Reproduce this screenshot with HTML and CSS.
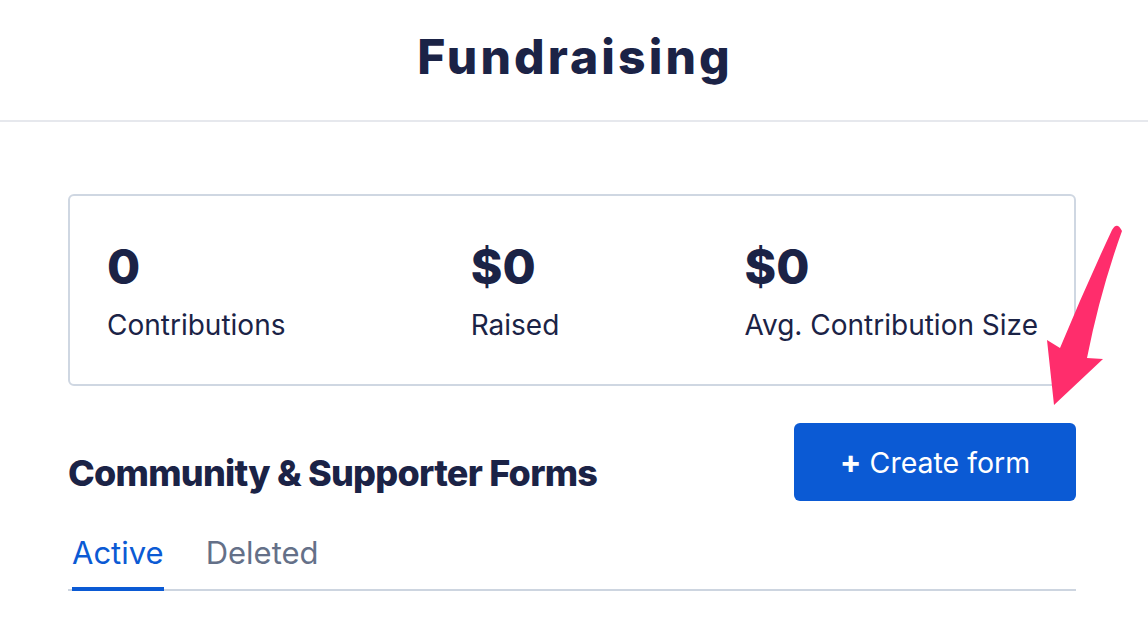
FILE: index.html
```html
<!DOCTYPE html>
<html lang="en">
  <head>
    <meta charset="UTF-8" />
    <meta name="viewport" content="width=device-width, initial-scale=1.0" />
    <title>Fundraising</title>
    <link rel="stylesheet" href="styles.css">
  </head>
  <body>
    <header class="page-header">
      <h1>Fundraising</h1>
    </header>

    <main class="container">
      <section class="stats-card">
        <div class="stat">
          <div class="stat-value">0</div>
          <div class="stat-label">Contributions</div>
        </div>
        <div class="stat">
          <div class="stat-value">$0</div>
          <div class="stat-label">Raised</div>
        </div>
        <div class="stat">
          <div class="stat-value">$0</div>
          <div class="stat-label">Avg. Contribution Size</div>
        </div>
      </section>

      <div class="section-head">
        <h2>Community &amp; Supporter Forms</h2>
        <button class="btn"><span class="btn-plus">+</span> Create form</button>
      </div>

      <nav class="tabs">
        <a class="tab active" href="#">Active</a>
        <a class="tab" href="#">Deleted</a>
      </nav>
    </main>

    <!-- annotation arrow drawn over the page -->
    <svg class="pointer-arrow" width="1148" height="634" viewBox="0 0 1148 634">
      <path d="M1112 230 Q1117 221 1122 231 Q1100 292 1087 358 L1103 359 L1054 405 L1047 340 L1060 348 Q1084 290 1112 230 Z" fill="#ff2d6c" />
    </svg>
  </body>
</html>
```

FILE: styles.css
```css
body {
  font-family: Inter, "Noto Sans", sans-serif;
  color: #1b2346;
  margin: 0;
  padding: 0;
  background: #fff;
}

.page-header {
  padding: 33px 0 39px;
  border-bottom: 2px solid #e6e8ed;
  text-align: center;
}

.page-header h1 {
  margin: 0;
  padding-left: 2px;
  font-size: 48px;
  line-height: 1;
  font-weight: 800;
  letter-spacing: 3.1px;
}

.container {
  margin: 72px 72px 0 68px;
}

.stats-card {
  display: flex;
  justify-content: space-between;
  border: 2px solid #cfd7e2;
  border-radius: 6px;
  padding: 47px 36px 45px 37px;
}

.stat-value {
  font-size: 48px;
  line-height: 1;
  font-weight: 800;
}

.stat-label {
  margin-top: 20px;
  font-size: 28px;
  line-height: 1;
}

.section-head {
  display: flex;
  justify-content: space-between;
  align-items: flex-start;
  margin-top: 37px;
}

.section-head h2 {
  margin: 32px 0 0;
  font-size: 36px;
  line-height: 1;
  font-weight: 800;
  letter-spacing: -0.75px;
}

.btn {
  width: 282px;
  height: 78px;
  background-color: #0b5ad4;
  color: white;
  border: none;
  border-radius: 6px;
  font-family: inherit;
  font-size: 28.5px;
  line-height: 1;
  cursor: pointer;
}

.btn-plus {
  font-weight: 700;
  font-size: 32px;
}

.tabs {
  display: flex;
  gap: 42px;
  margin-top: 35px;
  padding-left: 4px;
  border-bottom: 2px solid #cdd5e0;
}

.tab {
  font-size: 31px;
  line-height: 1;
  color: #647088;
  text-decoration: none;
  padding-top: 1px;
  padding-bottom: 19px;
  border-bottom: 6px solid transparent;
  margin-bottom: -4px;
}

.tab.active {
  color: #0b5ad4;
  border-bottom-color: #0b5ad4;
}

.pointer-arrow {
  position: absolute;
  top: 0;
  left: 0;
  pointer-events: none;
}
```
